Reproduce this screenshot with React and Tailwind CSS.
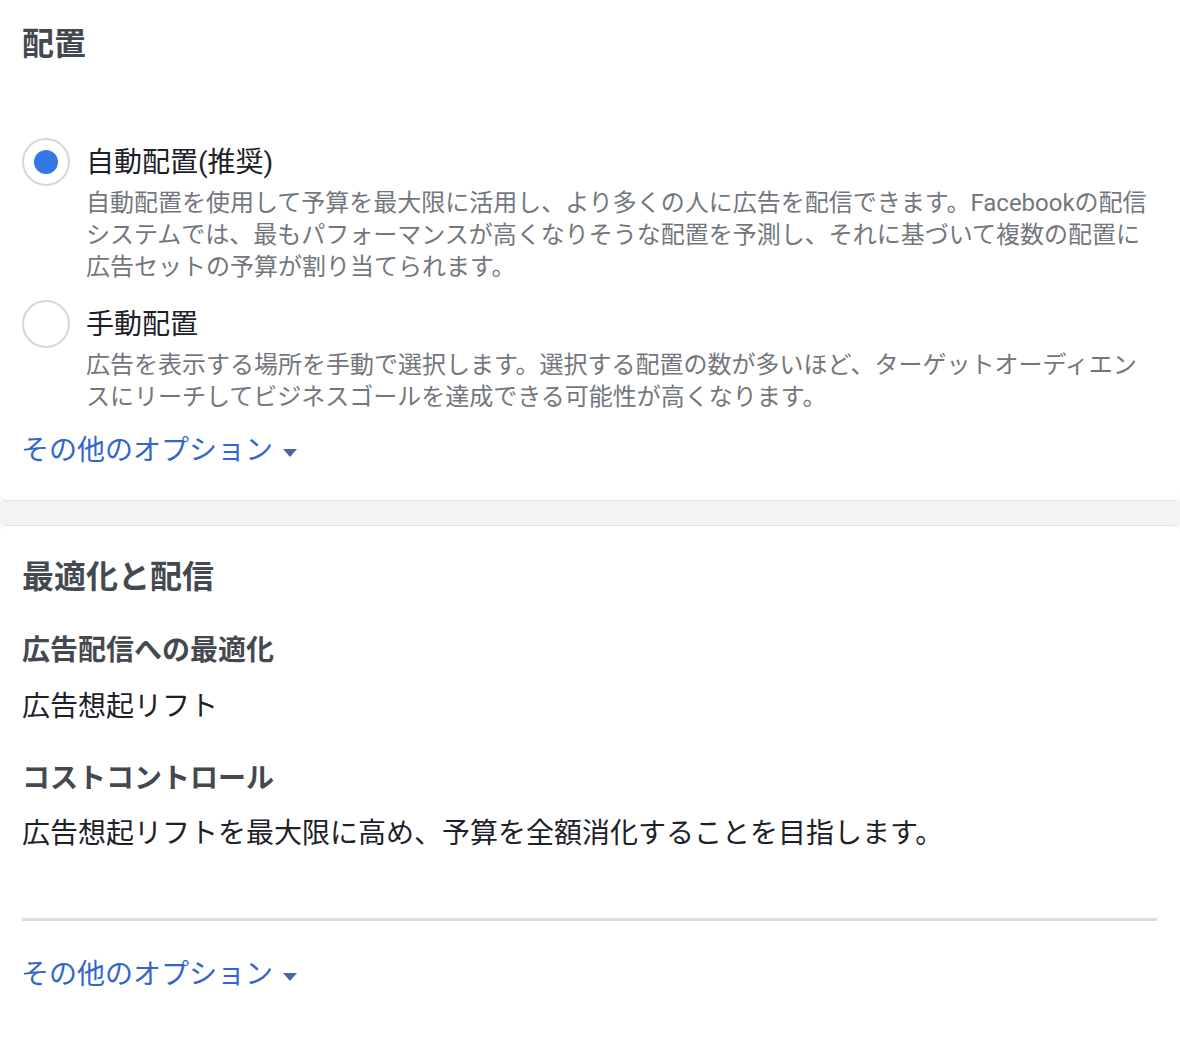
function Radio({ checked }) {
    return (
        <div className="w-[48px] h-[48px] shrink-0 rounded-full border-2 border-[#d5d7da] bg-white flex items-center justify-center mt-[-5px]">
            {checked && <div className="w-[24px] h-[24px] rounded-full bg-[#3578e5]" />}
        </div>
    );
}

function MoreOptions() {
    return (
        <button className="flex items-center gap-[10px] text-[28px] leading-[40px] text-[#3366cc] cursor-pointer ml-[-1px]">
            その他のオプション
            <svg width="14" height="8" viewBox="0 0 14 8" className="mt-[4px]">
                <path d="M0 0 L14 0 L7 8 Z" fill="#4a64a8" />
            </svg>
        </button>
    );
}

function Option({ checked, label, children }) {
    return (
        <div className="flex items-start gap-[16px]">
            <Radio checked={checked} />
            <div className="flex flex-col gap-[4px]">
                <div className="text-[28px] leading-[40px] text-[#1d2129]">{label}</div>
                <p className="w-[1066px] text-[24px] leading-[32px] text-[#73777d]">{children}</p>
            </div>
        </div>
    );
}

export default function App() {
    return (
        <div className="w-[1180px] min-h-[1057px] bg-white font-['Roboto','Noto_Sans_CJK_JP',sans-serif]">
            {/* 配置 */}
            <div className="bg-white pt-[24px] pb-[29px] px-[22px] border-b border-[#e2e4e7] rounded-b-[6px]">
                <h2 className="text-[32px] leading-[40px] font-bold text-[#444950]">配置</h2>

                <div className="mt-[79px] flex flex-col gap-[22px]">
                    <Option checked label="自動配置(推奨)">
                        自動配置を使用して予算を最大限に活用し、より多くの人に広告を配信できます。Facebookの配信システムでは、最もパフォーマンスが高くなりそうな配置を予測し、それに基づいて複数の配置に広告セットの予算が割り当てられます。
                    </Option>
                    <Option label="手動配置">
                        広告を表示する場所を手動で選択します。選択する配置の数が多いほど、ターゲットオーディエンスにリーチしてビジネスゴールを達成できる可能性が高くなります。
                    </Option>
                </div>

                <div className="mt-[18px]">
                    <MoreOptions />
                </div>
            </div>

            {/* 区切り */}
            <div className="h-[24px] bg-[#f2f3f4]" />

            {/* 最適化と配信 */}
            <div className="bg-white pt-[31px] pb-[64px] px-[22px] border-t border-[#e2e4e7] rounded-t-[6px]">
                <h2 className="text-[32px] leading-[40px] font-bold text-[#444950]">最適化と配信</h2>

                <h3 className="mt-[34px] text-[28px] leading-[40px] font-bold text-[#444950]">広告配信への最適化</h3>
                <p className="mt-[16px] text-[28px] leading-[40px] text-[#1d2129]">広告想起リフト</p>

                <h3 className="mt-[32px] text-[28px] leading-[40px] font-bold text-[#444950]">コストコントロール</h3>
                <p className="mt-[15px] text-[28px] leading-[40px] text-[#1d2129]">
                    広告想起リフトを最大限に高め、予算を全額消化することを目指します。
                </p>

                <div className="mt-[64px] mr-[1px] h-[3px] bg-[#dadde1]" />

                <div className="mt-[34px]">
                    <MoreOptions />
                </div>
            </div>
        </div>
    );
}
